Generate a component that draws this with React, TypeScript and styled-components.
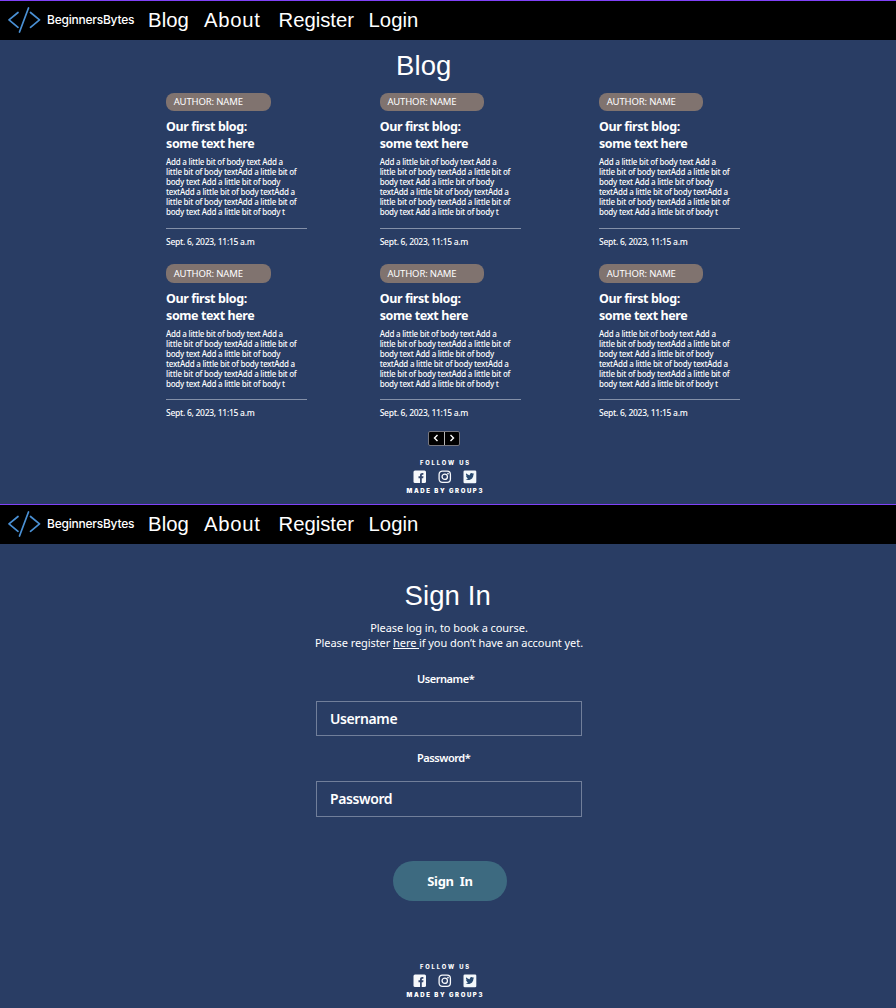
import React from "react";
import styled, { createGlobalStyle } from "styled-components";

const GlobalStyle = createGlobalStyle`
  * { box-sizing: border-box; }
  body { margin: 0; background: #293d64; }
  h1, h2, p { margin: 0; }
`;

const sans = `"Liberation Sans", Arial, sans-serif`;
const humanist = `"Noto Sans", "Open Sans", sans-serif`;

const Page = styled.div`
  width: 896px;
  color: #fff;
  font-family: ${humanist};
`;

const Screen = styled.section`
  height: 504px;
  display: flex;
  flex-direction: column;
  background: #293d64;
  border-top: 1px solid #8041f7;
  overflow: hidden;
`;

const Nav = styled.nav`
  flex: none;
  height: 39px;
  display: flex;
  align-items: center;
  background: #000;
  padding: 0 0 1px 8px;
  white-space: nowrap;
`;

const Brand = styled.a`
  display: flex;
  align-items: center;
  width: 140px;
  gap: 6px;
  font: 500 12px/16px Inter, sans-serif;
  letter-spacing: -0.23px;
`;

const NavLink = styled.a<{ $w: number; $track?: number }>`
  width: ${(p) => p.$w}px;
  font: 400 20.3px/24px ${sans};
  letter-spacing: ${(p) => p.$track ?? 0}px;
`;

const Title = styled.h1<{ $top: number; $shift: number }>`
  margin-top: ${(p) => p.$top}px;
  padding-left: ${(p) => p.$shift}px;
  font: 400 27.5px/32px ${sans};
  letter-spacing: 0.1px;
  white-space: pre;
`;

const BlogGrid = styled.div`
  display: grid;
  grid-template-columns: 213.7px 219.300px 141px;
  grid-template-rows: 171.5px 158px;
  padding-left: 166px;
  margin-top: 10.6px;
`;

const Card = styled.article`
  width: 141px;
  white-space: nowrap;
`;

const Author = styled.div`
  width: 104.5px;
  height: 18.5px;
  padding: 0.45px 0 0 7.7px;
  border-radius: 8px;
  background: #80736f;
  font: 400 9.5px/18px ${humanist};
  letter-spacing: -0.15px;
`;

const CardTitle = styled.h2`
  margin-top: 7.2px;
  font: 700 12.5px/17px ${humanist};
  letter-spacing: -0.4px;
`;

const CardBody = styled.p`
  margin-top: 5.2px;
  font: 500 8px/10px ${humanist};
  letter-spacing: -0.24px;
`;

const CardDate = styled.p`
  margin-top: 10.1px;
  padding-top: 7px;
  border-top: 1px solid #8490a8;
  font: 500 8.5px/12px ${humanist};
  letter-spacing: -0.28px;
`;

const Pager = styled.div`
  display: flex;
  align-self: flex-start;
  width: 32px;
  height: 15px;
  margin: 8.9px 0 0 428px;
  border: 1px solid #77777f;
  border-radius: 2px;
  background: #000;
`;

const PagerButton = styled.a`
  flex: 1;
  display: flex;
  align-items: center;
  justify-content: center;
  & + & { border-left: 1px solid #b5b5b5; }
`;

const Footer = styled.footer`
  margin-top: auto;
  padding-bottom: 9px;
  width: 889px;
  display: flex;
  flex-direction: column;
  align-items: center;
`;

const Follow = styled.p`
  font: 800 5.8px/8px Inter, sans-serif;
  letter-spacing: 1.9px;
  margin-right: -1.9px;
`;

const Social = styled.div`
  display: flex;
  gap: 11px;
  margin: 3px 0 3px 0;
`;

const Made = styled.p`
  font: 900 6px/8px Inter, sans-serif;
  letter-spacing: 1.6px;
  margin-right: -1.6px;
`;

const Intro = styled.p`
  margin-top: 8px;
  width: 898px;
  text-align: center;
  font: 400 11px/15px ${humanist};
  letter-spacing: -0.07px;
`;

const Form = styled.form`
  width: 266px;
  margin-left: 316px;
  display: flex;
  flex-direction: column;
`;

const Label = styled.label<{ $top: number }>`
  margin-top: ${(p) => p.$top}px;
  padding-left: 101px;
  font: 600 11px/15px ${humanist};
  letter-spacing: -0.45px;
`;

const Input = styled.div<{ $top: number; $h: number }>`
  margin-top: ${(p) => p.$top}px;
  height: ${(p) => p.$h}px;
  padding-left: 13px;
  border: 1px solid #717f9a;
  font: 600 14px/34px ${humanist};
  letter-spacing: -0.4px;
`;

const Submit = styled.div`
  width: 114px;
  height: 40px;
  margin: 44px 0 0 77px;
  border-radius: 20px;
  background: #3d6a80;
  text-align: center;
  font: 700 13px/40px ${humanist};
  letter-spacing: -0.3px;
  word-spacing: 3px;
`;

const LogoIcon = () => (
  <svg width="33" height="27" viewBox="0 0 33 27" fill="none" stroke="#4a90d4" strokeWidth="1.7" strokeLinecap="round" strokeLinejoin="round">
    <path d="M10 5.500 1 12.900 10 20.300M22.500 5.500l9 7.400-9 7.400M20.500 1 11.500 25" />
  </svg>
);

const Facebook = () => (
  <svg width="14" height="14" viewBox="0 0 14 14">
    <rect x="0.500" y="0.500" width="12.500" height="12.500" rx="1.500" fill="#f6f8fb" />
    <path d="M7 13V8.300H5.500V6.300H7V5.200c0-1.500.9-2.300 2.300-2.300h1.100v1.800h-.8c-.6 0-.8.300-.8.800v.8h1.700l-.3 2H8.800V13" fill="#34476d" />
  </svg>
);

const Instagram = () => (
  <svg width="14" height="14" viewBox="0 0 14 14" fill="none" stroke="#f6f8fb">
    <rect x="1.100" y="1.100" width="11.300" height="11.300" rx="3.300" strokeWidth="1.300" />
    <circle cx="6.750" cy="6.750" r="2.700" strokeWidth="1.300" />
    <circle cx="10" cy="3.600" r="0.850" fill="#f6f8fb" stroke="none" />
  </svg>
);

const Twitter = () => (
  <svg width="14" height="14" viewBox="0 0 14 14">
    <rect x="0.500" y="0.500" width="12.800" height="12.800" rx="1.300" fill="#f3f8fb" />
    <path transform="translate(2.600 2.200) scale(.36)" fill="#294a70" d="M23.950 4.570a10 10 0 0 1-2.820.780 4.960 4.960 0 0 0 2.160-2.730c-.950.560-2 .960-3.130 1.190a4.920 4.920 0 0 0-8.380 4.480C7.690 8.100 4.070 6.130 1.640 3.160a4.920 4.920 0 0 0 1.520 6.570 4.900 4.900 0 0 1-2.230-.610v.060a4.920 4.920 0 0 0 3.950 4.830 5 5 0 0 1-2.210.080 4.940 4.940 0 0 0 4.600 3.420A9.870 9.870 0 0 1 0 19.540a13.990 13.990 0 0 0 7.550 2.210c9.050 0 14-7.500 14-13.980 0-.210 0-.420-.020-.630a9.940 9.940 0 0 0 2.420-2.570z" />
  </svg>
);

const NavBar = () => (
  <Nav>
    <Brand><LogoIcon />BeginnersBytes</Brand>
    <NavLink $w={56} $track={0.1}>Blog</NavLink>
    <NavLink $w={74.5} $track={0.75}>About</NavLink>
    <NavLink $w={90}>Register</NavLink>
    <NavLink $w={60} $track={0.05}>Login</NavLink>
  </Nav>
);

const SiteFooter = () => (
  <Footer>
    <Follow>FOLLOW US</Follow>
    <Social><Facebook /><Instagram /><Twitter /></Social>
    <Made>MADE BY GROUP3</Made>
  </Footer>
);

const BlogCard = () => (
  <Card>
    <Author>AUTHOR: NAME</Author>
    <CardTitle>Our first blog:<br />some text here</CardTitle>
    <CardBody>
      Add a little bit of body text Add a<br />
      little bit of body textAdd a little bit of<br />
      body text Add a little bit of body<br />
      textAdd a little bit of body textAdd a<br />
      little bit of body textAdd a little bit of<br />
      body text Add a little bit of body t
    </CardBody>
    <CardDate>Sept. 6, 2023, 11:15 a.m</CardDate>
  </Card>
);

export default function App() {
  return (
    <Page>
      <GlobalStyle />
      <Screen>
        <NavBar />
        <Title $top={10} $shift={396}>Blog</Title>
        <BlogGrid>
          {[0, 1, 2, 3, 4, 5].map((i) => <BlogCard key={i} />)}
        </BlogGrid>
        <Pager>
          <PagerButton>
            <svg width="6" height="8" viewBox="0 0 6 8" fill="none" stroke="#fff" strokeWidth="1.400"><path d="M4.500 1 1.500 4l3 3" /></svg>
          </PagerButton>
          <PagerButton>
            <svg width="6" height="8" viewBox="0 0 6 8" fill="none" stroke="#fff" strokeWidth="1.400"><path d="m1.500 1 3 3-3 3" /></svg>
          </PagerButton>
        </Pager>
        <SiteFooter />
      </Screen>
      <Screen>
        <NavBar />
        <Title $top={36} $shift={404.5}>Sign In</Title>
        <Intro>
          Please log in, to book a course.<br />
          Please register <u>here </u>if you don’t have an account yet.
        </Intro>
        <Form>
          <Label $top={21}>Username*</Label>
          <Input $top={15} $h={35}>Username</Input>
          <Label $top={14}>Password*</Label>
          <Input $top={16} $h={36}>Password</Input>
          <Submit>Sign In</Submit>
        </Form>
        <SiteFooter />
      </Screen>
    </Page>
  );
}
